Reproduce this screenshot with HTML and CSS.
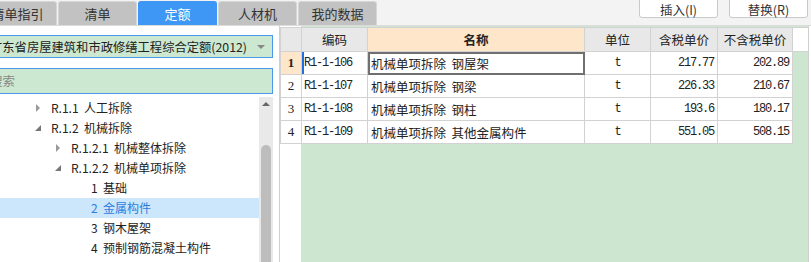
FILE: index.html
```html
<!DOCTYPE html>
<html>
<head>
	<title>定额</title>
	<link rel="stylesheet" href="styles.css">
</head>
<body>
	<div class='top-bar'>
		<div class='tabs'>
			<div class='tab'>清单指引</div>
			<div class='tab'>清单</div>
			<div class='tab active'>定额</div>
			<div class='tab'>人材机</div>
			<div class='tab'>我的数据</div>
		</div>
		<div class='actions'>
			<button>插入(I)</button>
			<button>替换(R)</button>
		</div>
	</div>

	<div class='main'>
		<div class='side-panel'>
			<div class='select-box'>
				<span>广东省房屋建筑和市政修缮工程综合定额(2012)</span>
				<i class='caret'></i>
			</div>
			<div class='search-box'>搜索</div>
			<div class='tree-wrap'>
				<div class='tree'>
					<div class='node lv2'><i class='arrow closed'></i>R.1.1&nbsp; 人工拆除</div>
					<div class='node lv2'><i class='arrow open'></i>R.1.2&nbsp; 机械拆除</div>
					<div class='node lv3'><i class='arrow closed'></i>R.1.2.1&nbsp; 机械整体拆除</div>
					<div class='node lv3'><i class='arrow open'></i>R.1.2.2&nbsp; 机械单项拆除</div>
					<div class='node lv4'>1&nbsp; 基础</div>
					<div class='node lv4 selected'>2&nbsp; 金属构件</div>
					<div class='node lv4'>3&nbsp; 钢木屋架</div>
					<div class='node lv4'>4&nbsp; 预制钢筋混凝土构件</div>
				</div>
				<div class='scrollbar'>
					<i class='up'></i>
					<div class='thumb'></div>
				</div>
			</div>
		</div>

		<div class='grid-panel'>
			<table class='grid'>
				<colgroup>
					<col class='c-num'>
					<col class='c-code'>
					<col class='c-name'>
					<col class='c-unit'>
					<col class='c-tax'>
					<col class='c-notax'>
					<col>
				</colgroup>
				<thead>
					<tr>
						<th></th>
						<th>编码</th>
						<th class='name-head'>名称</th>
						<th>单位</th>
						<th>含税单价</th>
						<th>不含税单价</th>
						<th class='filler'></th>
					</tr>
				</thead>
				<tbody>
					<tr class='current'>
						<td class='num'>1</td>
						<td class='code'>R1-1-106</td>
						<td class='name'>机械单项拆除&nbsp; 钢屋架</td>
						<td class='unit'>t</td>
						<td class='price'>217.77</td>
						<td class='price'>202.89</td>
						<td class='filler'></td>
					</tr>
					<tr>
						<td class='num'>2</td>
						<td class='code'>R1-1-107</td>
						<td class='name'>机械单项拆除&nbsp; 钢梁</td>
						<td class='unit'>t</td>
						<td class='price'>226.33</td>
						<td class='price'>210.67</td>
						<td class='filler'></td>
					</tr>
					<tr>
						<td class='num'>3</td>
						<td class='code'>R1-1-108</td>
						<td class='name'>机械单项拆除&nbsp; 钢柱</td>
						<td class='unit'>t</td>
						<td class='price'>193.6</td>
						<td class='price'>180.17</td>
						<td class='filler'></td>
					</tr>
					<tr>
						<td class='num'>4</td>
						<td class='code'>R1-1-109</td>
						<td class='name'>机械单项拆除&nbsp; 其他金属构件</td>
						<td class='unit'>t</td>
						<td class='price'>551.05</td>
						<td class='price'>508.15</td>
						<td class='filler'></td>
					</tr>
				</tbody>
			</table>
		</div>
	</div>
</body>
</html>
```

FILE: styles.css
```css
body{
	margin: 0;
	width: 811px;
	height: 262px;
	overflow: hidden;
	font-family: "Noto Sans CJK SC", "Noto Sans", sans-serif;
	font-size: 12px;
	color: #222;
	background: #fff;
}

/* top bar */
.top-bar{
	height: 26px;
	display: flex;
	justify-content: space-between;
	background: #f3f3f3;
	border-bottom: 1px solid #dcdcdc;
	box-sizing: border-box;
}
.tabs{
	display: flex;
	gap: 1px;
	margin-left: -22px;
	padding-top: 1px;
}
.tab{
	width: 79px;
	height: 24px;
	box-sizing: border-box;
	background: #c2c2c2;
	border: 1px solid #d6d6d6;
	border-bottom: none;
	border-radius: 3px 3px 0 0;
	text-align: center;
	line-height: 23px;
	font-size: 13px;
	color: #333;
}
.tab.active{
	background: #3e96f5;
	border-color: #3e96f5;
	color: #fff;
}
.actions{
	display: flex;
	gap: 11px;
	margin-right: 3px;
	margin-top: -5px;
}
.actions button{
	width: 79px;
	height: 23px;
	padding: 4px 0 0 0;
	background: #fff;
	border: 1px solid #c9c9c9;
	border-radius: 3px;
	font-family: "Noto Sans CJK SC", "Noto Sans", sans-serif;
	font-size: 12.5px;
	color: #333;
}

/* left panel */
.main{
	display: flex;
	height: 236px;
}
.side-panel{
	width: 273px;
	overflow: hidden;
	padding-top: 9px;
	box-sizing: border-box;
}
.select-box{
	margin-left: -20px;
	height: 23px;
	box-sizing: border-box;
	background: #cde8d0;
	border: 1px solid #4a97ee;
	display: flex;
	align-items: center;
	justify-content: space-between;
	padding: 0 7px 0 9px;
	font-size: 12.3px;
	color: #222;
	white-space: nowrap;
}
.caret{
	width: 0;
	height: 0;
	border-left: 4px solid transparent;
	border-right: 4px solid transparent;
	border-top: 4px solid #888;
}
.search-box{
	margin-left: -20px;
	margin-top: 10px;
	height: 26px;
	box-sizing: border-box;
	background: #cde8d0;
	border: 1px solid #4a97ee;
	padding-left: 9px;
	line-height: 24px;
	font-size: 12.5px;
	color: #888;
}
.tree-wrap{
	display: flex;
	margin-top: 3px;
}
.tree{
	width: 259px;
	padding-top: 1px;
}
.node{
	height: 20px;
	line-height: 20px;
	display: flex;
	align-items: center;
	white-space: nowrap;
	color: #222;
}
.node.lv2{ padding-left: 34px; }
.node.lv3{ padding-left: 54px; }
.node.lv4{ padding-left: 91px; }
.node.selected{
	background: #cce6fb;
	color: #2d7ee0;
}
.arrow{
	width: 17px;
	height: 20px;
	position: relative;
	flex: none;
}
.arrow.closed::after{
	content: '';
	position: absolute;
	left: 2px;
	top: 6px;
	border-top: 4px solid transparent;
	border-bottom: 4px solid transparent;
	border-left: 4px solid #9a9a9a;
}
.arrow.open::after{
	content: '';
	position: absolute;
	left: 1px;
	top: 7px;
	border-left: 6px solid transparent;
	border-bottom: 6px solid #777;
}
.scrollbar{
	width: 14px;
	height: 170px;
	background: #e9e9e9;
	position: relative;
}
.scrollbar .up{
	position: absolute;
	left: 3px;
	top: 5px;
	border-left: 4px solid transparent;
	border-right: 4px solid transparent;
	border-bottom: 4px solid #666;
}
.thumb{
	position: absolute;
	left: 2px;
	top: 48px;
	width: 10px;
	height: 140px;
	background: #bdbdbd;
	border-radius: 5px;
}

/* grid */
.grid-panel{
	margin-left: 6px;
	width: 530px;
	box-sizing: border-box;
	border-left: 1px solid #cfcfcf;
	border-right: 1px solid #cfcfcf;
	background: linear-gradient(to right, #fff 21px, #cde6cf 21px);
	padding-top: 1px;
}
.grid{
	width: 100%;
	border-collapse: collapse;
	table-layout: fixed;
}
.c-num{ width: 21px; }
.c-code{ width: 66px; }
.c-name{ width: 217px; }
.c-unit{ width: 66px; }
.c-tax{ width: 67px; }
.c-notax{ width: 75px; }
.grid th{
	height: 23px;
	padding: 0;
	background: #e8e8e8;
	border: 1px solid #d2d2d2;
	font-weight: normal;
	font-size: 12.5px;
	color: #222;
}
.grid th.name-head{
	background: #fde6c9;
	font-weight: bold;
}
.grid th.filler{
	background: #fff;
	border-right: none;
}
.grid td{
	height: 22px;
	padding: 0 3px;
	background: #fff;
	border: 1px solid #d2d2d2;
	white-space: nowrap;
	overflow: hidden;
}
.grid td.filler{
	background: #cde6cf;
	border: none;
	border-left: 1px solid #d2d2d2;
}
.grid td.num{
	padding: 0;
	text-align: center;
	font-family: "Liberation Serif", serif;
	font-size: 13px;
	background: #fff;
}
.grid tr.current td.num{
	background: #fde6c9;
	font-weight: bold;
}
.grid td.code, .grid td.unit, .grid td.price{
	font-family: "Liberation Mono", monospace;
	font-size: 12px;
	letter-spacing: -1.2px;
}
.grid td.code{
	padding-left: 2px;
}
.grid tr.current td.code{
	box-shadow: inset 2px 0 #1d6fe6;
}
.grid td.unit{
	text-align: center;
}
.grid td.price{
	text-align: right;
	padding-right: 3px;
}
.grid td.name{
	font-size: 12.5px;
}
.grid tr.current td.name{
	outline: 2px solid #707070;
	outline-offset: -2px;
}
```
